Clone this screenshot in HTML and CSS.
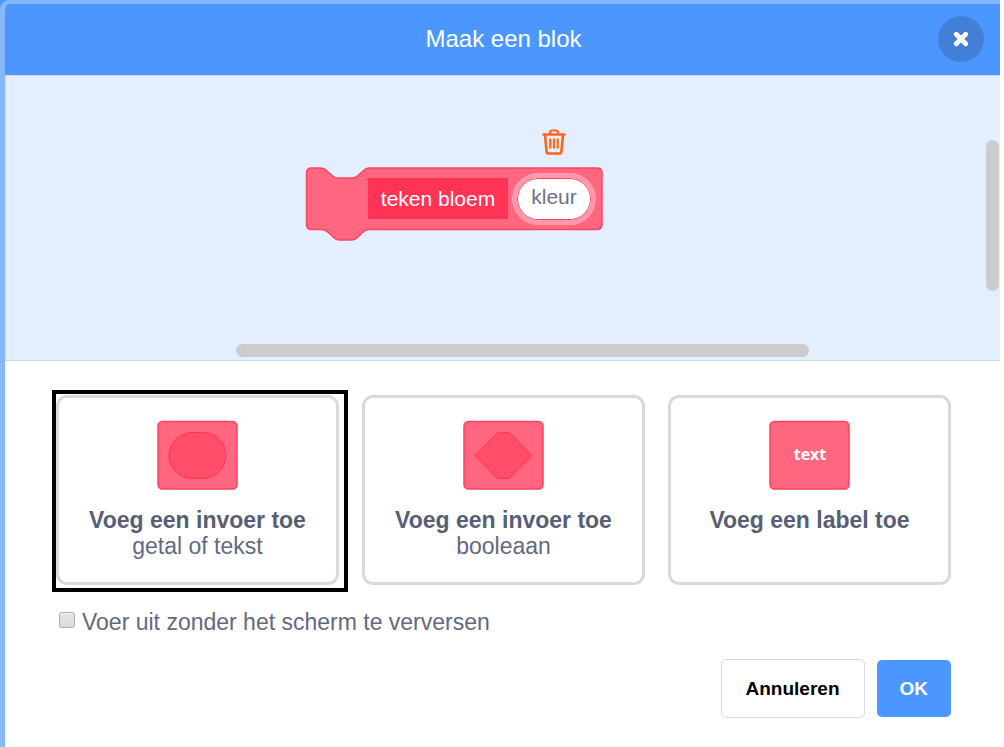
FILE: index.html
```html
<!DOCTYPE html>
<html lang="nl">
<head>
<meta charset="utf-8">
<meta name="viewport" content="width=device-width, initial-scale=1">
<title>Maak een blok</title>
<link rel="stylesheet" href="styles.css">
</head>
<body>
<div class="backdrop">
<div class="dialog" role="dialog" aria-labelledby="dialog-title">
  <header class="header">
    <h1 class="title" id="dialog-title">Maak een blok</h1>
    <button class="close" type="button" aria-label="Sluiten">
      <svg width="16" height="16" viewBox="0 0 16 16" aria-hidden="true"><path d="M3.300 3.300 12.700 12.700M12.700 3.300 3.300 12.700" stroke="#fff" stroke-width="4.800" stroke-linecap="round"/></svg>
    </button>
  </header>

  <div class="workspace">
    <button class="trash" type="button" aria-label="Verwijder invoer">
      <svg width="26" height="28" viewBox="0 0 26 28" fill="none" stroke="#ff661a" aria-hidden="true">
        <path d="M9 6V4.500Q9 2.500 11 2.500H15Q17 2.500 17 4.500V6" stroke-width="2.200"/>
        <path d="M2.500 6.500H23.500" stroke-width="2.600" stroke-linecap="round"/>
        <path d="M4 7 5.600 23.500Q5.800 25.500 7.800 25.500H18.200Q20.200 25.500 20.400 23.500L22 7" stroke-width="2.600"/>
        <path d="M9.300 10.500V20.500M13 10.500V20.500M16.700 10.500V20.500" stroke-width="2.200"/>
      </svg>
    </button>
    <div class="block">
      <svg class="block-shape" width="298" height="76" viewBox="0 0 298 76" aria-hidden="true">
        <path d="M1.500 7Q1.500 2 6.500 2H15C18 2 20 3 22 5L27 9.500Q30 12 33 12H47Q50 12 53 9.500L58 5C60 3 62 2 64 2H292Q297 2 297 7V58.500Q297 63.500 292 63.500H64C61 63.500 59 65 57 67L53 71Q50 74 47 74H34Q31 74 28 71L24 67C22 65 20 63.500 16 63.500H6.500Q1.500 63.500 1.500 58.500Z" fill="#ff6680" stroke="#ff4562" stroke-width="1.500"/>
      </svg>
      <input class="block-name" type="text" value="teken bloem" aria-label="Naam van het blok">
      <input class="block-arg" type="text" value="kleur" aria-label="Naam van de invoer">
    </div>
    <div class="scroll scroll-y"></div>
    <div class="scroll scroll-x"></div>
  </div>

  <div class="body">
    <div class="options">
      <button class="option is-selected" type="button">
        <svg class="tile" width="82" height="70" viewBox="0 0 82 70" aria-hidden="true">
          <rect x="1" y="1.500" width="79" height="67.500" rx="4.500" fill="#ff6680" stroke="#ff4060" stroke-width="1.500"/>
          <rect x="12" y="12.500" width="57" height="46" rx="23" fill="#ff4d6a" stroke="#ff3355"/>
        </svg>
        <span class="option-title">Voeg een invoer toe</span>
        <span class="option-note">getal of tekst</span>
      </button>
      <button class="option" type="button">
        <svg class="tile" width="82" height="70" viewBox="0 0 82 70" aria-hidden="true">
          <rect x="1" y="1.500" width="79" height="67.500" rx="4.500" fill="#ff6680" stroke="#ff4060" stroke-width="1.500"/>
          <path d="M34.500 12.500H46.500L69 35.500 46.500 58.500H34.500L12 35.500Z" fill="#ff4d6a" stroke="#ff3355"/>
        </svg>
        <span class="option-title">Voeg een invoer toe</span>
        <span class="option-note">booleaan</span>
      </button>
      <button class="option" type="button">
        <svg class="tile" width="82" height="70" viewBox="0 0 82 70" aria-hidden="true">
          <rect x="1" y="1.500" width="79" height="67.500" rx="4.500" fill="#ff6680" stroke="#ff4060" stroke-width="1.500"/>
          <text class="tile-text" x="41" y="40" text-anchor="middle">text</text>
        </svg>
        <span class="option-title">Voeg een label toe</span>
      </button>
    </div>

    <label class="refresh">
      <input class="check" type="checkbox">
      <span>Voer uit zonder het scherm te verversen</span>
    </label>

    <div class="actions">
      <button class="btn btn-cancel" type="button">Annuleren</button>
      <button class="btn btn-ok" type="button">OK</button>
    </div>
  </div>
</div>
</div>
</body>
</html>
```
FILE: styles.css
```css
* {
  box-sizing: border-box;
}

body {
  margin: 0;
  background: #fff;
  color: #575e75;
  font-family: "Liberation Sans", Arial, sans-serif;
}

button,
input {
  margin: 0;
  padding: 0;
  border: 0;
  font: inherit;
  color: inherit;
}

.backdrop {
  min-height: 100vh;
  margin-right: 4px;
  display: flex;
  background: #4c97ff;
}

.dialog {
  flex: 1;
  border: solid #86b8ff;
  border-width: 4px 0 0 5px;
  border-top-left-radius: 9px;
  background: #fff;
  overflow: hidden;
}

.header {
  display: grid;
  grid-template-columns: 1fr auto 1fr;
  align-items: center;
  height: 71px;
  padding: 0 16px 2px 0;
  background: #4c97ff;
}

.title {
  grid-column: 2;
  margin: 0;
  padding-left: 18px;
  font-size: 24px;
  font-weight: 400;
  line-height: 28px;
  color: #fff;
}

.close {
  justify-self: end;
  display: grid;
  place-items: center;
  width: 46px;
  height: 46px;
  border-radius: 50%;
  background: #4280d7;
}

.workspace {
  position: relative;
  height: 286px;
  border: solid #d0d7e3;
  border-width: 1px 0 1px 1px;
  background: #e3effe;
  overflow: hidden;
}

.trash {
  position: absolute;
  left: 535px;
  top: 52px;
  width: 26px;
  height: 28px;
  background: none;
}

.block {
  position: absolute;
  left: 299px;
  top: 90px;
  display: flex;
  align-items: center;
  gap: 4px;
  width: 298px;
  height: 65px;
  padding-left: 63px;
}

.block-shape {
  position: absolute;
  left: 0;
  top: 0;
}

.block-name,
.block-arg {
  position: relative;
  font-size: 21px;
  text-align: center;
}

.block-name {
  width: 140px;
  height: 41px;
  background: #ff3355;
  color: #fff;
}

.block-arg {
  width: 84px;
  height: 52px;
  padding-bottom: 4px;
  border: 5px solid #ff99aa;
  border-radius: 26px;
  background: #fff;
  box-shadow: inset 0 0 0 1px #ff4562;
  color: #6b728a;
}

.scroll {
  position: absolute;
  border-radius: 7px;
  background: #ccc;
}

.scroll-y {
  right: 1px;
  top: 64px;
  width: 13px;
  height: 151px;
}

.scroll-x {
  left: 230px;
  bottom: 3px;
  width: 573px;
  height: 13px;
}

.body {
  padding: 34px 49px 28px 51px;
}

.options {
  display: grid;
  grid-template-columns: repeat(3, 1fr);
  gap: 23px;
}

.option {
  position: relative;
  display: flex;
  flex-direction: column;
  align-items: center;
  min-height: 190px;
  padding-top: 22px;
  border: 3px solid #d9d9d9;
  border-radius: 11px;
  background: #fff;
  font-size: 23px;
  line-height: 26px;
}

.is-selected::after {
  content: "";
  position: absolute;
  inset: -8px -12px -10px -7px;
  border: 4px solid #000;
}

.tile {
  margin-bottom: 17px;
}

.tile-text {
  font: 700 16px "Open Sans", sans-serif;
  fill: #fff;
}

.option-title {
  font-weight: 700;
}

.option-note,
.refresh {
  color: #626981;
}

.refresh {
  display: flex;
  align-items: center;
  gap: 7px;
  width: fit-content;
  margin-top: 24px;
  padding-left: 3px;
  font-size: 23px;
  line-height: 26px;
}

.check {
  appearance: none;
  width: 16px;
  height: 16px;
  margin-bottom: 4px;
  border: 1px solid #adadad;
  border-radius: 3px;
  background: linear-gradient(#e6e6e6, #dadada);
  box-shadow: inset 0 1px 1px #f5f5f5;
}

.check:checked {
  background: #4c97ff;
}

.actions {
  display: flex;
  justify-content: flex-end;
  align-items: center;
  gap: 12px;
  margin-top: 24px;
}

.btn {
  border-radius: 5px;
  font-size: 19px;
  font-weight: 700;
  line-height: 21px;
}

.btn-cancel {
  padding: 18px 24px;
  border: 1px solid #d9d9d9;
  background: #fff;
  color: #000;
}

.btn-ok {
  padding: 18px 23px;
  background: #4c97ff;
  color: #fff;
}
```
